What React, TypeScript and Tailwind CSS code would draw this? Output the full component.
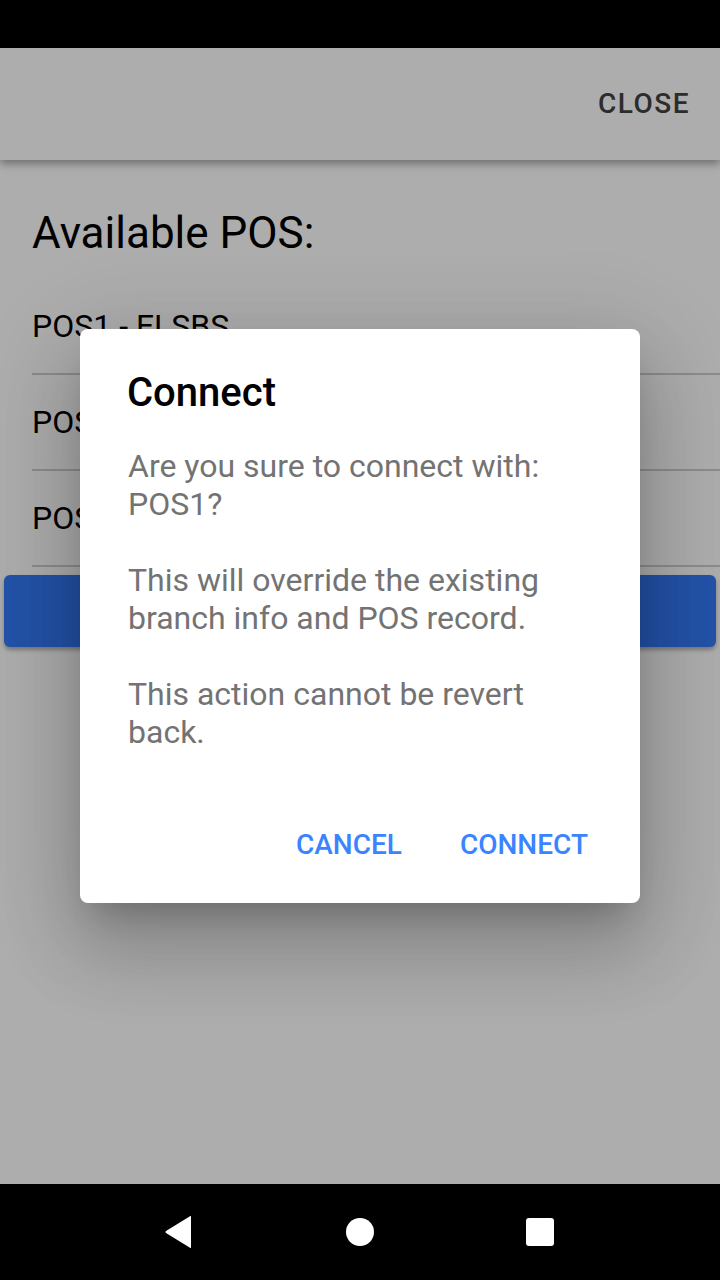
import React from "react";

const items = ["POS1 - ELSBS", "POS2 - ELSBS", "POS3 - ELSBS"];

export default function App() {
  return (
    <div className="relative h-[1280px] w-[720px] overflow-hidden bg-white font-['Roboto',sans-serif] flex flex-col">
      {/* Status bar */}
      <div className="h-12 bg-black shrink-0" />

      {/* Toolbar */}
      <header className="relative z-10 h-[112px] shrink-0 bg-white flex items-center justify-end pr-[30px] shadow-[0_4px_8px_rgba(0,0,0,0.35)]">
        <button className="text-[28px] font-medium tracking-[1.5px] text-[#424242]">CLOSE</button>
      </header>

      {/* Content */}
      <main className="flex-1 bg-white">
        <h1 className="pl-8 pt-[47px] text-[44px] leading-[52px] text-black">Available POS:</h1>
        <ul className="mt-5 pl-8">
          {items.map((name) => (
            <li key={name} className="h-24 flex items-center border-b-2 border-[#cfcfcf] text-[32px] text-black">
              {name}
            </li>
          ))}
        </ul>
        <div className="px-1 pt-2">
          <button className="h-[72px] w-full rounded-md bg-[#3479f6] shadow-[0_3px_4px_rgba(0,0,0,0.3)]" />
        </div>
      </main>

      {/* Navigation bar */}
      <nav className="relative z-40 h-24 shrink-0 bg-black flex justify-center items-center">
        <div className="w-[180px] flex justify-center">
          <svg width="28" height="34" viewBox="0 0 28 34" className="-ml-1">
            <path d="M27 1.5 L27 32.5 Q27 33.5 26 32.8 L2 18 Q0.8 17 2 16 L26 1.2 Q27 0.6 27 1.5 Z" fill="white" />
          </svg>
        </div>
        <div className="w-[180px] flex justify-center">
          <div className="h-7 w-7 rounded-full bg-white" />
        </div>
        <div className="w-[180px] flex justify-center">
          <div className="h-7 w-7 rounded-[3px] bg-white" />
        </div>
      </nav>

      {/* Backdrop */}
      <div className="absolute left-0 right-0 top-0 bottom-24 z-20 bg-black/[0.32]" />

      {/* Alert dialog */}
      <div className="absolute left-0 right-0 top-12 bottom-24 z-30 flex items-center justify-center">
        <div className="w-[560px] rounded-lg bg-white shadow-[0_22px_30px_-14px_rgba(0,0,0,0.2),0_48px_76px_6px_rgba(0,0,0,0.14),0_18px_92px_16px_rgba(0,0,0,0.12)]">
          <h2 className="pl-[47px] pr-12 pt-10 pb-[30px] text-[40px] leading-[48px] font-medium text-black">Connect</h2>
          <p className="pl-12 pr-14 text-[32px] leading-[38px] text-[#737373]">
            Are you sure to connect with: POS1?
            <br />
            <br />
            This will override the existing branch info and POS record.
            <br />
            <br />
            This action cannot be revert back.
          </p>
          <div className="flex justify-end gap-[18px] pt-[58px] pb-[22px] pr-8">
            <button className="h-[72px] px-5 text-[28px] font-medium text-[#3a84ff]">CANCEL</button>
            <button className="h-[72px] px-5 text-[28px] font-medium text-[#3a84ff]">CONNECT</button>
          </div>
        </div>
      </div>
    </div>
  );
}
